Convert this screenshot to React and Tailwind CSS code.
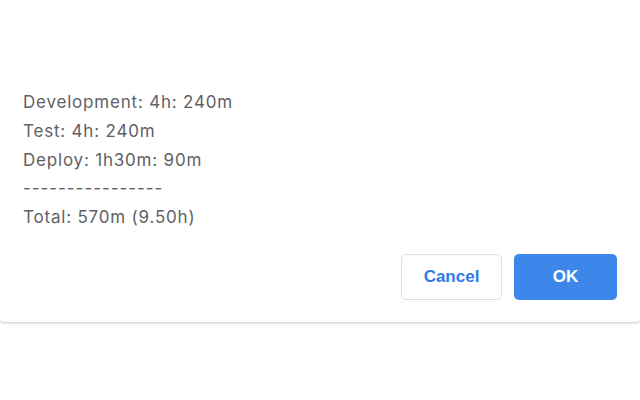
import React from "react";

const lines = [
  "Development: 4h: 240m",
  "Test: 4h: 240m",
  "Deploy: 1h30m: 90m",
  "----------------",
  "Total: 570m (9.50h)",
];

const App = () => {
  return (
    <div className="w-[640px] h-[400px] bg-white" style={{ fontFamily: '"Liberation Sans", Arial, sans-serif' }}>
      {/* Dialog */}
      <div className="bg-white rounded-b-[4px] border-b border-[#d9d9d9] shadow-[0_1px_2px_rgba(0,0,0,0.12)] pt-[88px] pb-[22px] px-[23px]">
        <div className="text-[17px] leading-[28.8px] text-[#5f6165]" style={{ fontFamily: "Inter, sans-serif" }}>
          {lines.map((line, i) => (
            <div key={i} className={line.startsWith("-") ? "tracking-[0.95px]" : "tracking-[0.8px]"}>{line}</div>
          ))}
        </div>
        <div className="flex justify-end gap-[12px] mt-[22px]">
          <button className="w-[101px] h-[46px] rounded-[5px] border border-[#dcdfe6] bg-white text-[#2f7be8] text-[17px] font-bold">
            Cancel
          </button>
          <button className="w-[103px] h-[46px] rounded-[5px] bg-[#3d87ea] text-white text-[17px] font-bold">
            OK
          </button>
        </div>
      </div>
    </div>
  );
};

export default App;
